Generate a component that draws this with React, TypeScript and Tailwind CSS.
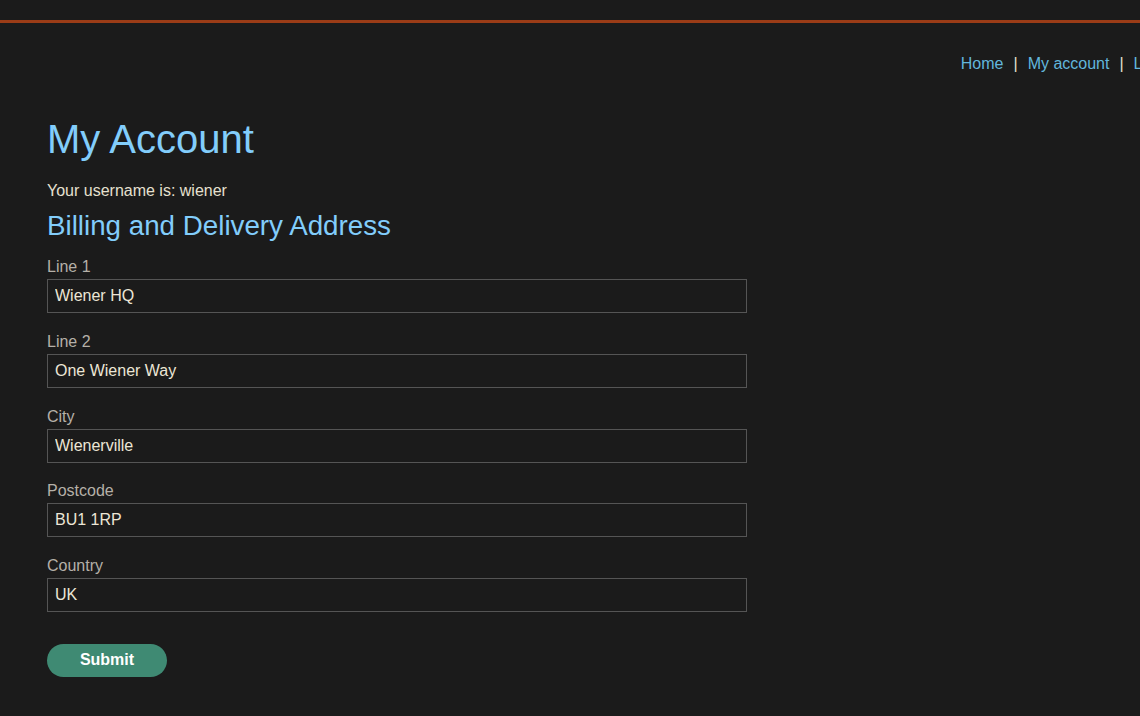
export default function App() {
  const fields = [
    { label: "Line 1", value: "Wiener HQ" },
    { label: "Line 2", value: "One Wiener Way" },
    { label: "City", value: "Wienerville" },
    { label: "Postcode", value: "BU1 1RP" },
    { label: "Country", value: "UK" },
  ];

  return (
    <div className="min-h-screen w-full overflow-hidden bg-[#1b1b1b] font-['Liberation_Sans',Arial,sans-serif] text-[16px]">
      {/* top accent bar */}
      <div className="h-[23px] border-b-[3px] border-[#9b3c17]" />

      <nav className="mr-[-47px] flex justify-end whitespace-nowrap pt-[32px] leading-[18px]">
        <a className="text-[#62b6dc]">Home</a>
        <span className="mx-[10px] text-[#e6e0d0]">|</span>
        <a className="text-[#62b6dc]">My account</a>
        <span className="mx-[10px] text-[#e6e0d0]">|</span>
        <a className="text-[#62b6dc]">Log out</a>
      </nav>

      <main className="pl-[47px]">
        <h1 className="mt-[43px] text-[40px] leading-[46px] text-[#82cdfb]">My Account</h1>
        <p className="mt-[20px] leading-[18px] text-[#e6e0d0]">Your username is: wiener</p>
        <h2 className="mt-[10px] text-[27.75px] leading-[32px] text-[#82cdfb]">Billing and Delivery Address</h2>

        <form className="mt-[16px] flex flex-col gap-[19.75px]" onSubmit={(e) => e.preventDefault()}>
          {fields.map((f) => (
            <label key={f.label} className="flex flex-col">
              <span className="leading-[18px] text-[#b5b0a8]">{f.label}</span>
              <input
                defaultValue={f.value}
                className="mt-[3px] h-[34px] w-[700px] border border-[#555555] bg-[#1b1b1b] px-[7px] text-[16px] text-[#ece6d6] outline-none"
              />
            </label>
          ))}
          <div className="mt-[12px]">
            <button
              type="submit"
              className="h-[33px] w-[120px] rounded-full bg-[#3f8a73] font-bold text-white"
            >
              Submit
            </button>
          </div>
        </form>
      </main>
    </div>
  );
}
